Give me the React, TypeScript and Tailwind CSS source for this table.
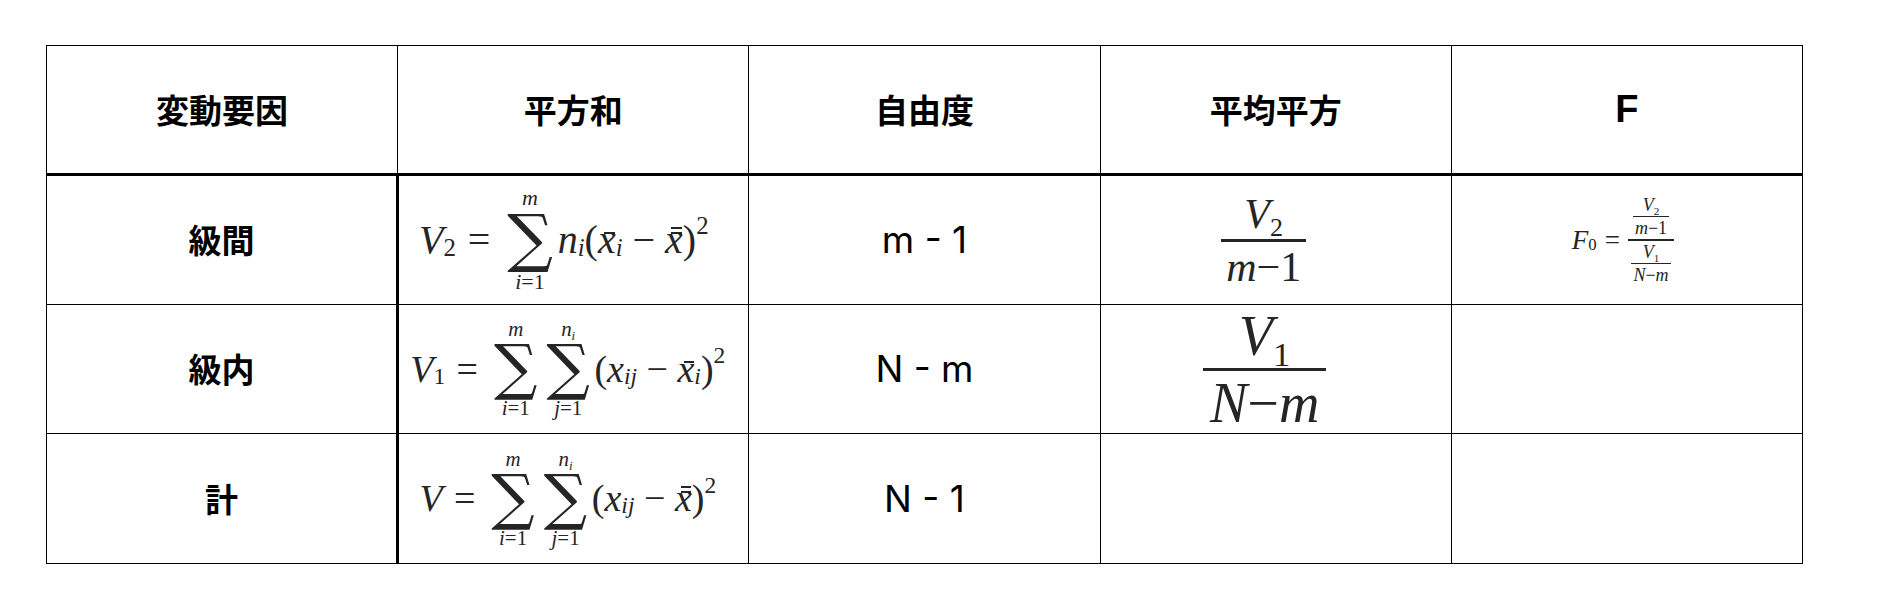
import type { ReactNode } from "react";

const serif = "font-['Liberation_Serif','Times_New_Roman',serif]";
const cjk = "font-['Noto_Sans_CJK_JP',sans-serif]";

function Sub({ children }: { children: ReactNode }) {
  return <span className="text-[0.62em] not-italic relative top-[0.32em]">{children}</span>;
}

function SubI({ children }: { children: ReactNode }) {
  return <span className="text-[0.62em] italic relative top-[0.32em]">{children}</span>;
}

function Sup({ children }: { children: ReactNode }) {
  return <span className="text-[0.62em] not-italic relative top-[-0.55em]">{children}</span>;
}

function Bar({ children, double = false }: { children: ReactNode; double?: boolean }) {
  return (
    <span className="relative inline-block">
      {children}
      <span className="absolute left-[0.16em] right-[0.02em] top-[0.3em] h-[0.05em] bg-current" />
      {double && <span className="absolute left-[0.16em] right-[0.02em] top-[0.18em] h-[0.05em] bg-current" />}
    </span>
  );
}

function Sum({ top, bottom }: { top: ReactNode; bottom: ReactNode }) {
  return (
    <span className="inline-flex flex-col items-center align-middle mx-[0.12em]">
      <span className="text-[0.55em] leading-none italic mb-[0.15em]">{top}</span>
      <span className="text-[1.6em] leading-[0.8] not-italic font-['DejaVu_Serif',serif]">∑</span>
      <span className="text-[0.55em] leading-none mt-[0.3em]">{bottom}</span>
    </span>
  );
}

function Frac({ num, den, bar }: { num: ReactNode; den: ReactNode; bar: string }) {
  return (
    <span className="inline-flex flex-col items-center align-middle">
      <span className="px-[0.12em] leading-none">{num}</span>
      <span className={`w-full bg-current ${bar}`} />
      <span className="px-[0.12em] leading-none">{den}</span>
    </span>
  );
}

const I = ({ children }: { children: ReactNode }) => <span className="italic">{children}</span>;

function Formula({ className, children }: { className: string; children: ReactNode }) {
  return (
    <div className={`flex items-center justify-center whitespace-nowrap leading-none text-[#252525] ${serif} ${className}`}>
      {children}
    </div>
  );
}

const head = `border border-black text-[33px] font-bold text-black ${cjk}`;
const label = `border border-black border-r-[3px] text-center text-[33px] font-bold text-black ${cjk}`;
const cell = "border border-black p-0";
const plain = "border border-black text-center text-[37px] text-black font-['Inter',sans-serif]";

export default function App() {
  return (
    <div className="w-[1890px] h-[606px] bg-white pt-[45px] pl-[46px]">
      <table className="w-[1757px] table-fixed border-collapse">
        <thead>
          <tr className="h-[129px]">
            <th className={`${head} border-b-[3px]`}>変動要因</th>
            <th className={`${head} border-b-[3px]`}>平方和</th>
            <th className={`${head} border-b-[3px]`}>自由度</th>
            <th className={`${head} border-b-[3px]`}>平均平方</th>
            <th className={`border border-black border-b-[3px] text-[38px] font-bold text-black font-['Liberation_Sans',sans-serif]`}>F</th>
          </tr>
        </thead>
        <tbody>
          <tr className="h-[130px]">
            <td className={label}>級間</td>
            <td className={cell}>
              <Formula className="text-[40px] pr-[20px]">
                <I>V</I>
                <Sub>2</Sub>
                <span className="mx-[0.3em]">=</span>
                <Sum top="m" bottom={<><I>i</I>=1</>} />
                <I>n</I>
                <SubI>i</SubI>
                <span>(</span>
                <I>
                  <Bar>x</Bar>
                </I>
                <SubI>i</SubI>
                <span className="mx-[0.25em]">−</span>
                <I>
                  <Bar double>x</Bar>
                </I>
                <span>)</span>
                <Sup>2</Sup>
              </Formula>
            </td>
            <td className={plain}>m - 1</td>
            <td className={cell}>
              <Formula className="text-[42px] pr-[24px]">
                <Frac
                  bar="h-[3px] my-[4px]"
                  num={
                    <>
                      <I>V</I>
                      <Sub>2</Sub>
                    </>
                  }
                  den={
                    <>
                      <I>m</I>−1
                    </>
                  }
                />
              </Formula>
            </td>
            <td className={cell}>
              <Formula className="text-[27px] pr-[8px]">
                <I>F</I>
                <Sub>0</Sub>
                <span className="mx-[0.3em]">=</span>
                <Frac
                  bar="h-[2px] my-[2px]"
                  num={
                    <span className="text-[18px]">
                      <Frac
                        bar="h-[1px] my-[2px]"
                        num={
                          <>
                            <I>V</I>
                            <Sub>2</Sub>
                          </>
                        }
                        den={
                          <>
                            <I>m</I>−1
                          </>
                        }
                      />
                    </span>
                  }
                  den={
                    <span className="text-[18px]">
                      <Frac
                        bar="h-[1px] my-[2px]"
                        num={
                          <>
                            <I>V</I>
                            <Sub>1</Sub>
                          </>
                        }
                        den={
                          <>
                            <I>N</I>−<I>m</I>
                          </>
                        }
                      />
                    </span>
                  }
                />
              </Formula>
            </td>
          </tr>
          <tr className="h-[129px]">
            <td className={label}>級内</td>
            <td className={cell}>
              <Formula className="text-[38px] pr-[12px]">
                <I>V</I>
                <Sub>1</Sub>
                <span className="mx-[0.3em]">=</span>
                <Sum top="m" bottom={<><I>i</I>=1</>} />
                <Sum top={<><I>n</I><SubI>i</SubI></>} bottom={<><I>j</I>=1</>} />
                <span>(</span>
                <I>x</I>
                <SubI>ij</SubI>
                <span className="mx-[0.25em]">−</span>
                <I>
                  <Bar>x</Bar>
                </I>
                <SubI>i</SubI>
                <span>)</span>
                <Sup>2</Sup>
              </Formula>
            </td>
            <td className={plain}>N - m</td>
            <td className={cell}>
              <Formula className="text-[56px] pr-[22px]">
                <Frac
                  bar="h-[3px] my-[4px]"
                  num={
                    <>
                      <I>V</I>
                      <Sub>1</Sub>
                    </>
                  }
                  den={
                    <>
                      <I>N</I>−<I>m</I>
                    </>
                  }
                />
              </Formula>
            </td>
            <td className={cell}></td>
          </tr>
          <tr className="h-[130px]">
            <td className={label}>計</td>
            <td className={cell}>
              <Formula className="text-[38px] pr-[12px]">
                <I>V</I>
                <span className="mx-[0.3em]">=</span>
                <Sum top="m" bottom={<><I>i</I>=1</>} />
                <Sum top={<><I>n</I><SubI>i</SubI></>} bottom={<><I>j</I>=1</>} />
                <span>(</span>
                <I>x</I>
                <SubI>ij</SubI>
                <span className="mx-[0.25em]">−</span>
                <I>
                  <Bar double>x</Bar>
                </I>
                <span>)</span>
                <Sup>2</Sup>
              </Formula>
            </td>
            <td className={plain}>N - 1</td>
            <td className={cell}></td>
            <td className={cell}></td>
          </tr>
        </tbody>
      </table>
    </div>
  );
}
